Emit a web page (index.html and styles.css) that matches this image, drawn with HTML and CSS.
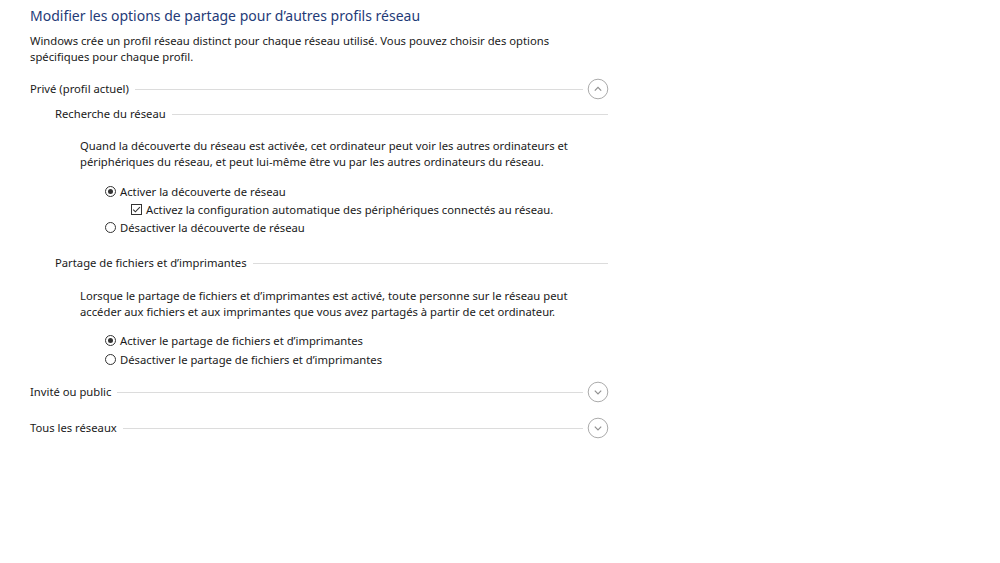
FILE: index.html
```html
<!DOCTYPE html>
<html lang="fr">
<head>
<meta charset="utf-8">
<title>Paramètres de partage avancés</title>
<link rel="stylesheet" href="styles.css">
</head>
<body>
<div class="page">
  <h1 class="title">Modifier les options de partage pour d’autres profils réseau</h1>
  <p class="intro">Windows crée un profil réseau distinct pour chaque réseau utilisé. Vous pouvez choisir des options<br>spécifiques pour chaque profil.</p>

  <section class="profile profile-open">
    <div class="profile-head">
      <span class="label">Privé (profil actuel)</span>
      <span class="rule"></span>
      <svg class="toggle" viewBox="0 0 22 22" width="22" height="22"><circle cx="11" cy="11" r="9.8" fill="none" stroke="#ababab" stroke-width="1"/><path d="M7.8 12.6 L11 9.4 L14.2 12.6" fill="none" stroke="#909090" stroke-width="1.2"/></svg>
    </div>

    <div class="group group-first">
      <div class="group-head"><span class="label">Recherche du réseau</span><span class="rule"></span></div>
      <p class="desc">Quand la découverte du réseau est activée, cet ordinateur peut voir les autres ordinateurs et<br>périphériques du réseau, et peut lui-même être vu par les autres ordinateurs du réseau.</p>
      <div class="options options-a">
        <div class="opt"><span class="radio on"></span>Activer la découverte de réseau</div>
        <div class="opt sub"><span class="check"><svg viewBox="0 0 11 11" width="11" height="11"><path d="M2.2 5.6 L4.4 7.8 L8.9 3.1" fill="none" stroke="#333" stroke-width="1.1"/></svg></span>Activez la configuration automatique des périphériques connectés au réseau.</div>
        <div class="opt"><span class="radio"></span>Désactiver la découverte de réseau</div>
      </div>
    </div>

    <div class="group group-second">
      <div class="group-head"><span class="label">Partage de fichiers et d’imprimantes</span><span class="rule"></span></div>
      <p class="desc desc-b">Lorsque le partage de fichiers et d’imprimantes est activé, toute personne sur le réseau peut<br>accéder aux fichiers et aux imprimantes que vous avez partagés à partir de cet ordinateur.</p>
      <div class="options options-b">
        <div class="opt"><span class="radio on"></span>Activer le partage de fichiers et d’imprimantes</div>
        <div class="opt"><span class="radio"></span>Désactiver le partage de fichiers et d’imprimantes</div>
      </div>
    </div>
  </section>

  <section class="profile profile-guest">
    <div class="profile-head">
      <span class="label">Invité ou public</span>
      <span class="rule"></span>
      <svg class="toggle" viewBox="0 0 22 22" width="22" height="22"><circle cx="11" cy="11" r="9.8" fill="none" stroke="#ababab" stroke-width="1"/><path d="M7.8 9.6 L11 12.8 L14.2 9.6" fill="none" stroke="#909090" stroke-width="1.2"/></svg>
    </div>
  </section>

  <section class="profile profile-all">
    <div class="profile-head">
      <span class="label">Tous les réseaux</span>
      <span class="rule"></span>
      <svg class="toggle" viewBox="0 0 22 22" width="22" height="22"><circle cx="11" cy="11" r="9.8" fill="none" stroke="#ababab" stroke-width="1"/><path d="M7.8 9.6 L11 12.8 L14.2 9.6" fill="none" stroke="#909090" stroke-width="1.2"/></svg>
    </div>
  </section>
</div>
</body>
</html>
```

FILE: styles.css
```css
html, body {
  margin: 0;
  padding: 0;
  background: #ffffff;
}

body {
  font-family: "Noto Sans", "Open Sans", sans-serif;
  font-size: 11.25px;
  color: #1a1a1a;
}

.page {
  width: 579px;
  padding: 5px 0 0 30px;
}

.title {
  margin: 0 0 6px 0;
  font-size: 14px;
  line-height: 22px;
  font-weight: 400;
  color: #1f3b78;
}

.intro,
.desc {
  margin: 0;
  line-height: 16px;
}

.profile-head {
  display: flex;
  align-items: center;
  height: 22px;
}

.profile-open { margin-top: 13px; }
.profile-guest { margin-top: 12px; }
.profile-all { margin-top: 14px; }

.group-first { margin-top: 6px; }

.label {
  white-space: nowrap;
  line-height: 16px;
}

.rule {
  flex: 1;
  height: 1px;
  background: #dcdcdc;
  margin-left: 6px;
}

.toggle {
  flex: none;
  margin-left: 4px;
  display: block;
}

.group {
  padding-left: 25px;
  padding-right: 1px;
}

.group-second { margin-top: 19px; }

.group-head {
  display: flex;
  align-items: center;
  height: 16px;
}

.desc {
  margin-top: 16px;
  padding-left: 25px;
}

.desc-b { margin-top: 17px; }

.options {
  padding-left: 50px;
}

.options-a { margin-top: 12px; }
.options-b { margin-top: 11px; }

.opt {
  display: flex;
  align-items: center;
  height: 18px;
  white-space: nowrap;
}

.options-b .opt { height: 19px; }

.opt.sub { padding-left: 26px; }

.radio {
  flex: none;
  width: 11px;
  height: 11px;
  box-sizing: border-box;
  border: 1px solid #333333;
  border-radius: 50%;
  margin-right: 4px;
  position: relative;
}

.radio.on::after {
  content: "";
  position: absolute;
  left: 2px;
  top: 2px;
  width: 5px;
  height: 5px;
  border-radius: 50%;
  background: #333333;
}

.check {
  flex: none;
  width: 11px;
  height: 11px;
  box-sizing: border-box;
  border: 1px solid #333333;
  margin-right: 4px;
  display: flex;
  align-items: center;
  justify-content: center;
}

.check svg {
  display: block;
  flex: none;
}
```
